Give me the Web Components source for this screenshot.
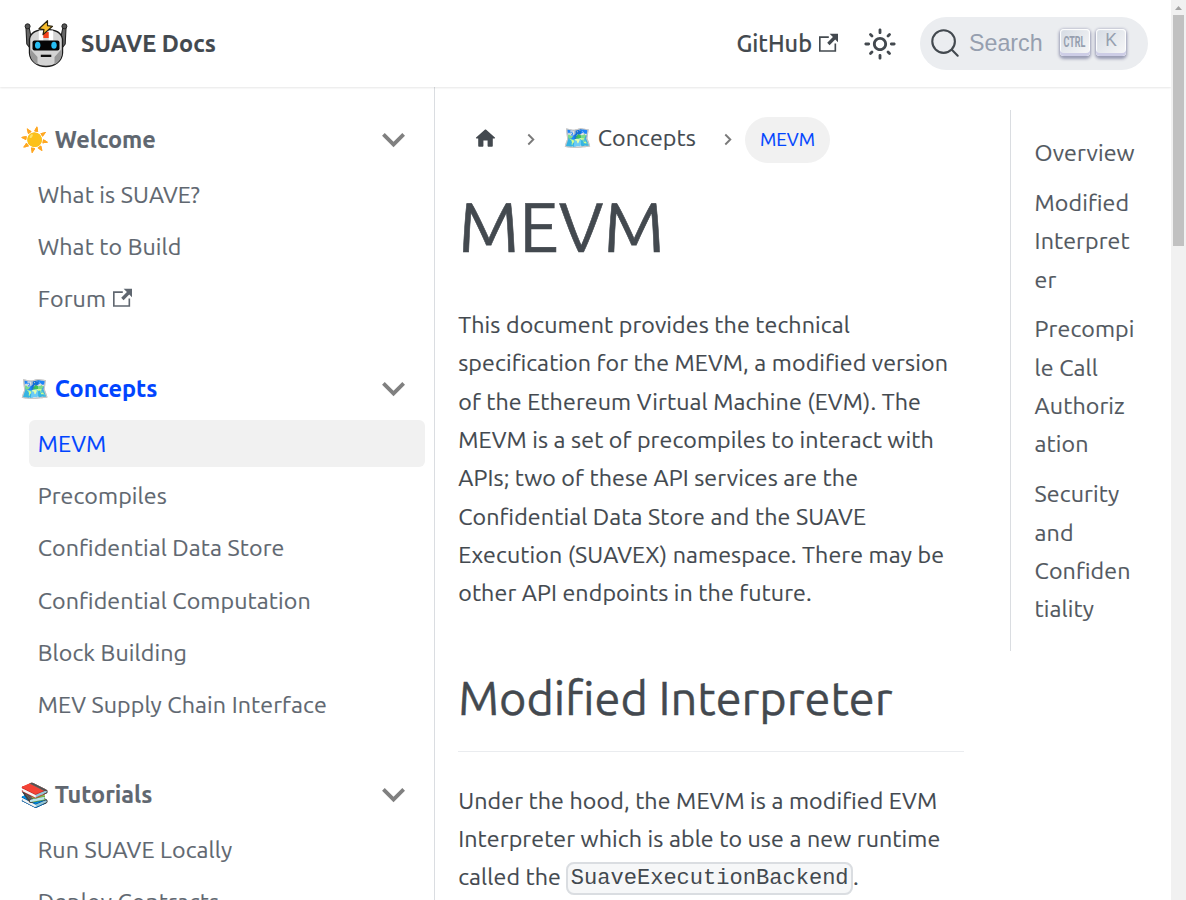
<!DOCTYPE html>
<html lang="en">
<head>
<meta charset="utf-8">
<title>MEVM | SUAVE Docs</title>
<style>
html{overflow:hidden;height:900px}
body{margin:0;height:900px;overflow:hidden;background:#fff;color:#43494f;font:400 23.230px/38.330px Ubuntu,"Noto Sans",sans-serif;letter-spacing:.110px;font-feature-settings:"liga" 1;-webkit-text-stroke:.15px}
</style>
</head>
<body>
<docs-app></docs-app>
<script>
const define = (name, html, after) => customElements.define(name, class extends HTMLElement {
  constructor() { super(); this.attachShadow({mode: 'open'}).innerHTML = html; }
  connectedCallback() { if (after) after(this, this.shadowRoot); }
});

define('external-icon', `<style>:host{display:inline-block;width:20px;height:20px}svg{display:block}</style>
<svg width="19.600" height="19.600" viewBox="0 0 24 24"><path fill="currentColor" d="M21 13v10h-21v-19h12v2h-10v15h17v-8h2zm3-12h-10.988l4.035 4-6.977 7.07 2.828 2.828 6.977-7.07 4.125 4.172v-11z"/></svg>`);

define('robot-logo', `<style>:host{display:block;width:46px;height:50px}svg{display:block}</style>
<svg width="46" height="50" viewBox="0 0 46 50" stroke-linejoin="round">
<path d="M3 8 3.800 24l4.700 6V19L6.200 8z" fill="#666" stroke="#222" stroke-width="1.100"/><path d="M43 8 42.200 24l-4.700 6V19l2.300-11z" fill="#666" stroke="#222" stroke-width="1.100"/>
<circle cx="4.600" cy="6.300" r="2.500" fill="#555" stroke="#222"/><circle cx="41.400" cy="6.300" r="2.500" fill="#555" stroke="#222"/>
<path d="M6.500 19C7.500 13 13 9.500 23 9.500s15.500 3.500 16.500 9.500v14c-.5 8-7.500 13.500-16.500 13.500S7 41 6.500 33z" fill="#d4d4d4" stroke="#1b1b1b" stroke-width="1.400"/>
<path d="M7.300 29l7.200 8v7.500c-4-2-7.200-6-7.200-11zM38.700 29l-7.200 8v7.500c4-2 7.200-6 7.200-11z" fill="#999"/>
<path d="M15.800 10.500h4.500v10h-4.500zM25.700 10.500h4.500v10h-4.500z" fill="#fff"/><path d="M20.300 12h5.400v6h-5.400z" fill="#f4421c"/>
<rect x="9.500" y="20.500" width="27" height="10" rx="2" fill="#050505"/>
<ellipse cx="14.700" cy="25.300" rx="2.700" ry="3.500" fill="#27bdf2"/><ellipse cx="31" cy="25.300" rx="2.700" ry="3.500" fill="#27bdf2"/>
<path d="M17.800 34.700h10.500v2.300H17.800z" fill="#111"/>
<path d="M24.500.7 16 8.800l5 .8-1 5 9.500-8.300-5-.6z" fill="#f8bd2c" stroke="#29220f" stroke-width="1.200"/>
</svg>`);

define('key-cap', `<style>:host{display:block;box-sizing:border-box;width:30px;height:27px;border-radius:4px;background:linear-gradient(-225deg,#d5dbe4,#f8f8f8);box-shadow:inset 0 -3px 0 #cdcde6,inset 0 0 1px 1px #fff,0 1.500px 3px 1px rgba(30,35,90,.4)}svg{display:block;overflow:visible}</style>
<svg width="30" height="27"><text text-anchor="middle" fill="#969faf"></text></svg>`, (el, root) => {
  const t = root.querySelector('text'), s = el.getAttribute('label');
  t.textContent = s;
  if (s.length > 1) { t.setAttribute('x', 14.5); t.setAttribute('y', 17.5); t.style.font = '700 14px Roboto,sans-serif'; t.setAttribute('textLength', 22); t.setAttribute('lengthAdjust', 'spacingAndGlyphs'); }
  else { t.setAttribute('x', 15); t.setAttribute('y', 17); t.style.font = '17.5px "Liberation Sans",sans-serif'; }
});

define('search-box', `<style>:host{box-sizing:border-box;display:flex;align-items:center;width:228px;height:53px;padding-left:10px;border-radius:27px;background:#ebedf0;color:#969faf;font:400 23.230px/30px "Liberation Sans",sans-serif;letter-spacing:0;-webkit-text-stroke:0}
svg{display:block;color:#43494f;margin:-1px 9px 0 0}.label{margin-top:-1px}.keys{display:flex;gap:6px;margin-left:auto;margin-right:22.500px;margin-top:-2px}</style>
<svg width="30" height="30" viewBox="0 0 20 20"><path d="M14.386 14.386l4.088 4.088-4.088-4.088c-2.942 2.942-7.711 2.942-10.653 0s-2.942-7.711 0-10.653 7.711-2.942 10.653 0 2.942 7.711 0 10.653z" stroke="currentColor" stroke-width="1.400" fill="none" stroke-linecap="round" stroke-linejoin="round"/></svg>
<span class="label">Search</span><div class="keys"><key-cap label="CTRL"></key-cap><key-cap label="K"></key-cap></div>`);

define('nav-bar', `<style>:host{box-sizing:border-box;display:flex;align-items:center;height:87px;padding:0 23px;background:#fff;box-shadow:0 1px 2px rgba(0,0,0,.1);position:relative;z-index:1;font-size:23.460px;letter-spacing:0}
robot-logo{margin:2px 0 0}.brand{margin-left:12px;font-weight:700;letter-spacing:.003em}.git{font-weight:500;margin-left:auto;display:flex;align-items:center;gap:6.500px}.git external-icon{margin-top:-1px}.sun{display:block;margin:0 23.500px 0 24px}</style>
<robot-logo></robot-logo><span class="brand">SUAVE Docs</span>
<span class="git"><span>GitHub</span><external-icon></external-icon></span>
<svg class="sun" width="34" height="34" viewBox="0 0 24 24"><path fill="#43494f" d="M12 9c1.650 0 3 1.350 3 3s-1.350 3-3 3-3-1.350-3-3 1.350-3 3-3m0-2c-2.760 0-5 2.240-5 5s2.240 5 5 5 5-2.240 5-5-2.240-5-5-5zM2 13h2c.55 0 1-.45 1-1s-.45-1-1-1H2c-.55 0-1 .45-1 1s.45 1 1 1zm18 0h2c.55 0 1-.45 1-1s-.45-1-1-1h-2c-.55 0-1 .45-1 1s.45 1 1 1zM11 2v2c0 .55.450 1 1 1s1-.45 1-1V2c0-.55-.45-1-1-1s-1 .45-1 1zm0 18v2c0 .55.450 1 1 1s1-.45 1-1v-2c0-.55-.45-1-1-1s-1 .45-1 1zM5.990 4.580a.996.996 0 0 0-1.410 0 .996.996 0 0 0 0 1.410l1.060 1.060c.39.390 1.030.390 1.410 0s.39-1.030 0-1.410L5.990 4.580zm12.370 12.370a.996.996 0 0 0-1.410 0 .996.996 0 0 0 0 1.410l1.060 1.060c.39.390 1.030.390 1.410 0a.996.996 0 0 0 0-1.410l-1.060-1.060zm1.060-10.960a.996.996 0 0 0 0-1.410.996.996 0 0 0-1.410 0l-1.060 1.060c-.39.390-.39 1.030 0 1.410s1.030.390 1.410 0l1.060-1.060zM7.050 18.360a.996.996 0 0 0 0-1.410.996.996 0 0 0-1.410 0l-1.060 1.060c-.39.390-.39 1.030 0 1.410s1.030.390 1.410 0l1.060-1.060z"/></svg>
<search-box></search-box>`);

define('side-group', `<style>:host{display:block;margin-bottom:43.100px;color:#606770}header{display:flex;align-items:center;height:46.600px;font-weight:700;padding:0 23px 0 20.300px}
:host([active]) header{color:#0044ff}.title{margin-top:-1px;font-size:23.460px;letter-spacing:0}.caret{margin-left:auto;display:block}
.items{display:flex;flex-direction:column;gap:5.600px;margin-top:8.500px}</style>
<header><span class="title"></span>
<svg class="caret" width="35" height="35" viewBox="0 0 24 24"><path fill="#808080" d="M7.410 7.590 12 12.170l4.590-4.580L18 9l-6 6-6-6z" transform="translate(-3.700 -2.400) scale(1.310)"/></svg></header>
<div class="items"><slot></slot></div>`, (el, root) => {
  root.querySelector('.title').textContent = el.getAttribute('label');
});

define('side-link', `<style>:host{box-sizing:border-box;display:flex;align-items:center;gap:6.500px;height:46.600px;margin:0 9.500px 0 29px;padding:0 0 1px 8.700px;border-radius:6px;white-space:nowrap}:host([active]){background:#f1f1f1;color:#0044ff}</style><slot></slot>`);

define('side-bar', `<style>:host{box-sizing:border-box;display:block;width:435px;flex:none;border-right:1px solid #dadde1;padding-top:29.200px;overflow:hidden}</style>
<side-group label="☀️ Welcome">
<side-link>What is SUAVE?</side-link><side-link>What to Build</side-link><side-link><span>Forum</span><external-icon></external-icon></side-link></side-group>
<side-group active label="🗺️ Concepts">
<side-link active>MEVM</side-link><side-link>Precompiles</side-link><side-link>Confidential Data Store</side-link><side-link>Confidential Computation</side-link><side-link>Block Building</side-link><side-link>MEV Supply Chain Interface</side-link></side-group>
<side-group label="📚 Tutorials">
<side-link>Run SUAVE Locally</side-link><side-link>Deploy Contracts</side-link></side-group>`);

define('bread-crumbs', `<style>:host{display:flex;align-items:center;height:46px;white-space:nowrap}.home{margin:-2px 0 0 15px;display:block}.sep{display:block;margin-left:29px}.sep.two{margin-left:28px}.crumb{margin:-4px 0 0 28px}.pill{margin-left:13px;box-sizing:border-box;width:85px;height:46px;border-radius:23px;background:#f1f1f1;color:#0044ff;font-size:18.770px;letter-spacing:0;line-height:46px;text-align:center}</style>
<svg class="home" width="25" height="25" viewBox="0 0 24 24"><path fill="currentColor" d="M10 19v-5h4v5c0 .55.450 1 1 1h3c.55 0 1-.45 1-1v-7h1.700c.46 0 .68-.57.330-.87L12.670 3.600c-.38-.34-.96-.34-1.340 0l-8.360 7.530c-.34.300-.13.870.330.870H5v7c0 .55.450 1 1 1h3c.55 0 1-.45 1-1z"/></svg>
<svg class="sep" width="8" height="13" viewBox="0 0 8 13"><path d="M1.300 1.500l5 5-5 5" fill="none" stroke="#7a7a7a" stroke-width="1.900"/></svg>
<span class="crumb">🗺️ Concepts</span>
<svg class="sep two" width="8" height="13" viewBox="0 0 8 13"><path d="M1.300 1.500l5 5-5 5" fill="none" stroke="#7a7a7a" stroke-width="1.900"/></svg>
<span class="pill">MEVM</span>`);

define('doc-article', `<style>:host{display:block;flex:none;width:506px;margin:29.500px 0 0 23.200px}h1,h2,p{margin:0;font-weight:inherit}h1,h2{letter-spacing:0}h1{font-size:70.300px;line-height:87px;margin-top:19px;-webkit-text-stroke:.6px}h2{font-size:46.920px;line-height:58px;margin-top:57.600px;padding-bottom:24px;border-bottom:1px solid #eaecef;-webkit-text-stroke:.4px}
.intro{margin-top:36.400px}.hood{margin-top:28.600px}code{border:2px solid #dadde1;border-radius:8px;background:#f6f7f8;font-family:"Liberation Mono",monospace;font-weight:400;letter-spacing:0;-webkit-text-stroke:0;font-size:22.060px;padding:2px 2.300px;white-space:nowrap;position:relative;top:-1px}</style>
<bread-crumbs></bread-crumbs><h1>MEVM</h1>
<p class="intro">This document provides the technical specification for the MEVM, a modified version of the Ethereum Virtual Machine (EVM). The MEVM is a set of precompiles to interact with APIs; two of these API services are the Confidential Data Store and the SUAVE Execution (SUAVEX) namespace. There may be other API endpoints in the future.</p>
<h2>Modified Interpreter</h2>
<p class="hood">Under the hood, the MEVM is a modified EVM Interpreter which is able to use a new runtime called the <code>SuaveExecutionBackend</code>.</p>`);

define('page-toc', `<style>:host{box-sizing:border-box;display:flex;flex-direction:column;gap:11.400px;flex:none;height:541px;width:126px;margin:23px 0 0 45.800px;padding:23.400px 0 0 23.600px;border-left:1px solid #dadde1;color:#525860;overflow-wrap:anywhere}</style>
<div>Overview</div><div>Modified Interpreter</div><div>Precompile Call Authorization</div><div>Security and Confidentiality</div>`);

define('scroll-rail', `<style>:host{display:flex;flex-direction:column;width:15px;height:900px;background:#f1f1f1;align-items:center}svg{display:block}i{width:11px;height:231px;background:#c1c1c1}</style><svg width="15" height="15"><path d="M4 10l3.500-4 3.500 4z" fill="#a3a3a3"/></svg><i></i>`);

define('docs-app', `<style>:host{display:grid;grid-template-columns:1171px 15px;height:900px;overflow:hidden}.page{display:flex;flex-direction:column;height:900px;overflow:hidden}.body{display:flex;flex:1;min-height:0;align-items:flex-start}side-bar{height:813px}</style>
<div class="page"><nav-bar></nav-bar><div class="body"><side-bar></side-bar><doc-article></doc-article><page-toc></page-toc></div></div><scroll-rail></scroll-rail>`);
</script>
</body>
</html>
